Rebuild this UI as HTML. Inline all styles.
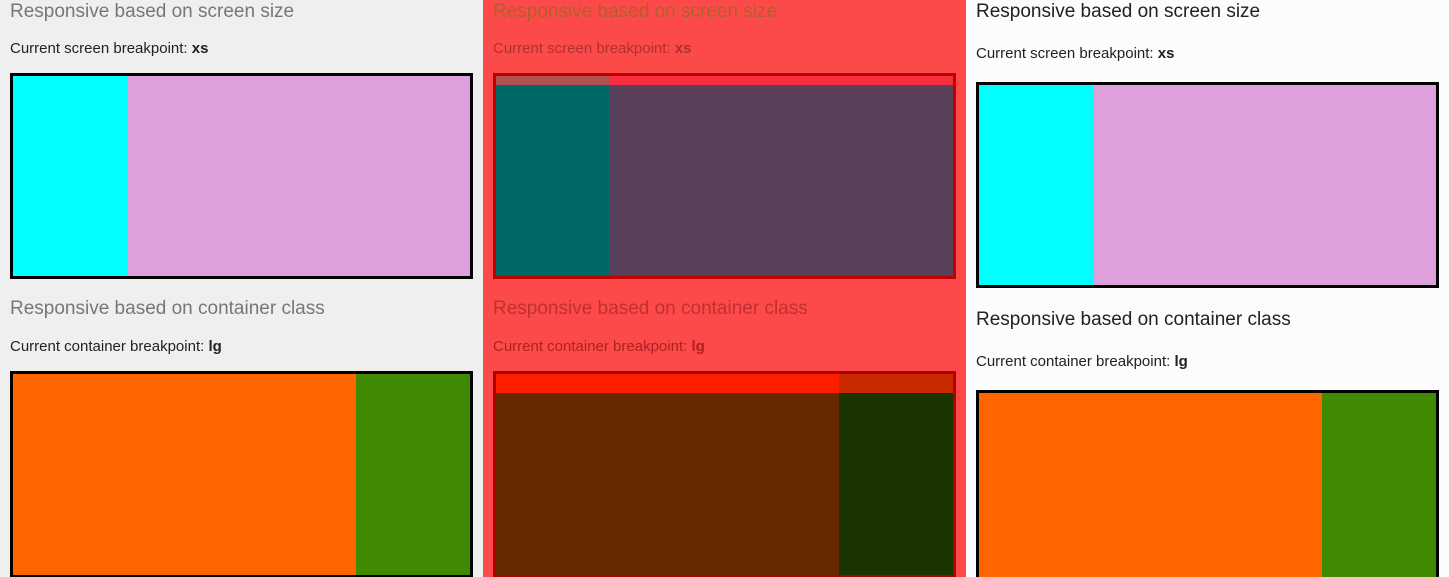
<!DOCTYPE html>
<html style="overflow:hidden"><head><style>
html,body{margin:0;width:1449px;height:577px;overflow:hidden}
body{position:relative;font-family:"Liberation Sans",sans-serif}
.p{position:absolute;top:0;height:577px;overflow:hidden}
.a{position:absolute;box-sizing:border-box;overflow:hidden}
.h{position:absolute;font-size:19px;white-space:nowrap}
.t{position:absolute;font-size:15px;white-space:nowrap}
</style></head><body>
<div class="p" style="left:0;width:483px;background:#efefef">
<div class="h" style="left:10px;top:1px;color:#777">Responsive based on screen size</div>
<div class="t" style="left:10px;top:40px;color:#222">Current screen breakpoint: <b>xs</b></div>
<div class="a" style="left:10px;top:73px;width:463px;height:206px;border:3px solid #000;background:#dda0dd"><div class="a" style="left:0;top:0;width:115px;height:100%;background:#0ff"></div></div>
<div class="h" style="left:10px;top:298px;color:#777">Responsive based on container class</div>
<div class="t" style="left:10px;top:338px;color:#222">Current container breakpoint: <b>lg</b></div>
<div class="a" style="left:10px;top:371px;width:463px;height:206px;border:3px solid #000;border-bottom-width:2px;background:#3f8a00"><div class="a" style="left:0;top:0;width:343px;height:100%;background:#f60"></div></div>
</div>
<div class="p" style="left:483px;width:483px;background:#fc4a4a">
<div class="h" style="left:10px;top:1px;color:#b0602a">Responsive based on screen size</div>
<div class="t" style="left:10px;top:40px;color:#b03030">Current screen breakpoint: <b>xs</b></div>
<div class="a" style="left:10px;top:73px;width:463px;height:206px;border:3px solid #c00000;background:#5a405a">
<div class="a" style="left:0;top:0;width:100%;height:9px;background:#f52f40"></div>
<div class="a" style="left:0;top:0;width:114px;height:9px;background:#b05050"></div>
<div class="a" style="left:0;top:9px;width:114px;height:191px;background:#006966"></div></div>
<div class="h" style="left:10px;top:298px;color:#c03030">Responsive based on container class</div>
<div class="t" style="left:10px;top:338px;color:#b02020">Current container breakpoint: <b>lg</b></div>
<div class="a" style="left:10px;top:371px;width:463px;height:206px;border:3px solid #b00000;border-bottom-width:2px;background:#1b3500">
<div class="a" style="left:0;top:0;width:100%;height:19px;background:#c82b00"></div>
<div class="a" style="left:0;top:0;width:343px;height:19px;background:#ff1e00"></div>
<div class="a" style="left:0;top:19px;width:343px;height:200px;background:#682800"></div></div>
</div>
<div class="p" style="left:966px;width:483px;background:#fcfcfc">
<div class="h" style="left:10px;top:1px;color:#222">Responsive based on screen size</div>
<div class="t" style="left:10px;top:45px;color:#222">Current screen breakpoint: <b>xs</b></div>
<div class="a" style="left:10px;top:82px;width:463px;height:206px;border:3px solid #000;background:#dda0dd"><div class="a" style="left:0;top:0;width:115px;height:100%;background:#0ff"></div></div>
<div class="h" style="left:10px;top:309px;color:#222">Responsive based on container class</div>
<div class="t" style="left:10px;top:353px;color:#222">Current container breakpoint: <b>lg</b></div>
<div class="a" style="left:10px;top:390px;width:463px;height:206px;border:3px solid #000;background:#3f8a00"><div class="a" style="left:0;top:0;width:343px;height:100%;background:#f60"></div></div>
</div>
</body></html>
